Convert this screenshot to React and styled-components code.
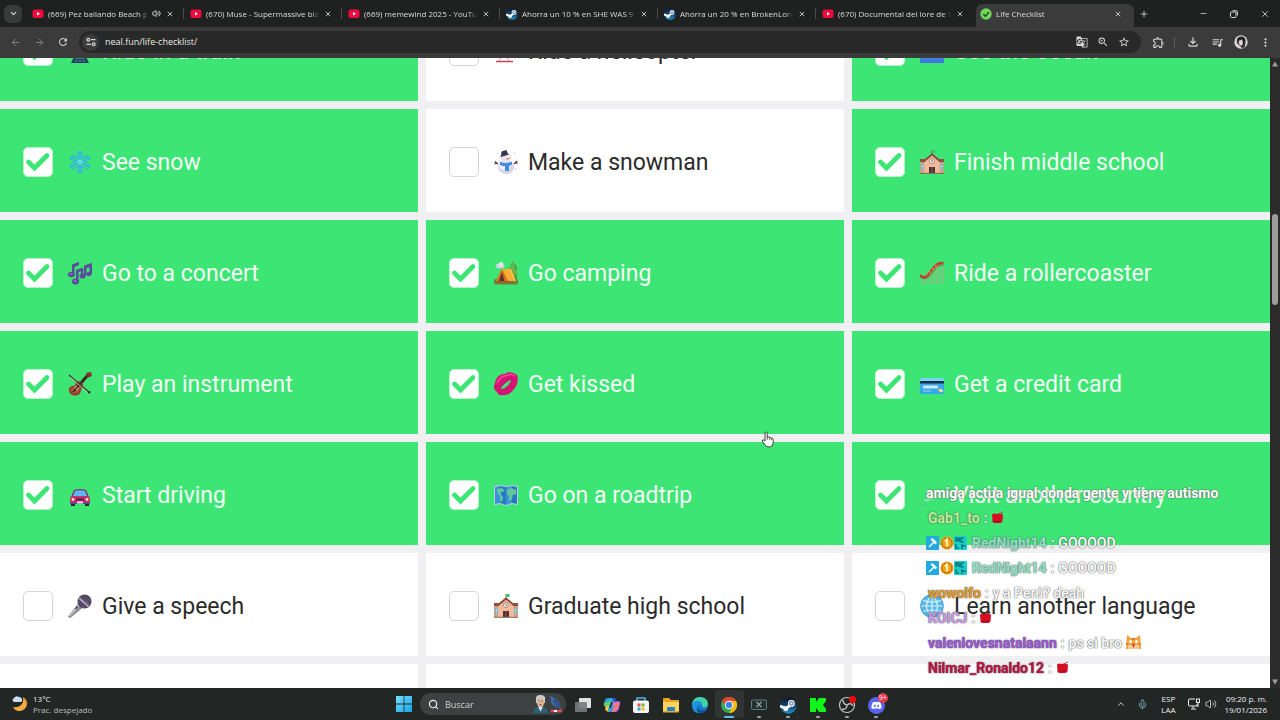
import React from "react";
import styled, { createGlobalStyle } from "styled-components";
import { Volume2, X, Plus, Minus, ChevronDown, ChevronUp, ArrowLeft, ArrowRight, Search, Mic } from "lucide-react";
import {
  MdGTranslate,
  MdZoomIn,
  MdStarBorder,
  MdOutlineExtension,
  MdOutlineFileDownload,
  MdQueueMusic,
  MdMoreVert,
  MdRefresh,
} from "react-icons/md";
import { FaDiscord } from "react-icons/fa";

const uiFont = `"Open Sans", "Noto Sans", sans-serif`;

const GlobalStyle = createGlobalStyle`
  *, *::before, *::after { box-sizing: border-box; }
  body { margin: 0; background: #202020; }
  button, input { font: inherit; color: inherit; margin: 0; padding: 0; border: 0; background: none; }
  button { cursor: pointer; }
  svg { display: block; flex: none; }
`;

const Screen = styled.div`
  display: flex;
  flex-direction: column;
  height: 100vh;
  overflow: hidden;
  font-family: ${uiFont};
`;

/* ---------- browser chrome ---------- */

const TabStrip = styled.header`
  display: flex;
  align-items: stretch;
  flex: none;
  height: 27px;
  background: #1f2020;
  color: #dcdcdc;
`;

const TabMenu = styled.button`
  display: grid;
  place-items: center;
  align-self: center;
  width: 18px;
  height: 18px;
  margin: 0 6px 0 4px;
  border-radius: 6px;
  background: #393a3a;
`;

const Tabs = styled.nav`
  display: flex;
  min-width: 0;
`;

const Tab = styled.div`
  display: flex;
  align-items: center;
  gap: 4px;
  flex: 0 1 158px;
  width: 158px;
  min-width: 0;
  margin-top: ${(p) => (p.$active ? "4px" : "0")};
  padding: 0 2px ${(p) => (p.$active ? "4px" : "0")} 4px;
  border-radius: 7px 7px 0 0;
  background: ${(p) => (p.$active ? "#3b3b3b" : "transparent")};
`;

const TabTitle = styled.a`
  flex: 1;
  min-width: 0;
  overflow: hidden;
  white-space: nowrap;
  font-size: 8px;
  line-height: 14px;
  color: inherit;
  text-decoration: none;
  mask-image: linear-gradient(to right, #000 calc(100% - 8px), transparent);
`;

const TabClose = styled.button`
  display: grid;
  place-items: center;
  width: 10px;
  height: 12px;
`;

const TabDivider = styled.span`
  width: 1px;
  height: 11px;
  margin-left: 4px;
  background: ${(p) => (p.$visible ? "#4a4a4a" : "transparent")};
`;

const IconButton = styled.button`
  display: grid;
  place-items: center;
  width: ${(p) => p.$w || 24}px;
  height: ${(p) => p.$h || 20}px;
  color: ${(p) => (p.$dim ? "#858585" : "#d6d6d6")};
`;

const WindowControls = styled.div`
  display: flex;
  align-items: center;
  margin-left: auto;
`;

const Toolbar = styled.div`
  display: flex;
  align-items: center;
  flex: none;
  height: 31px;
  padding: 0 3px 1px 3px;
  background: #3b3b3b;
  color: #d6d6d6;
`;

const AddressBar = styled.label`
  display: flex;
  align-items: center;
  flex: 1;
  height: 22px;
  margin: 0 6px 0 4px;
  padding: 0 6px 0 3px;
  border-radius: 11px;
  background: #282828;
`;

const SiteInfo = styled.span`
  display: grid;
  place-items: center;
  width: 17px;
  height: 17px;
  margin-right: 6px;
  border-radius: 50%;
  background: #3b3b3b;
`;

const AddressInput = styled.input`
  flex: 1;
  min-width: 0;
  font-size: 9px;
  line-height: 16px;
  color: #e8e8e8;
  outline: none;
`;

const ToolbarDivider = styled.span`
  width: 1px;
  height: 11px;
  margin: 0 6px 0 5px;
  background: #5a5a5a;
`;

/* ---------- checklist page ---------- */

const Viewport = styled.main`
  position: relative;
  display: flex;
  align-items: stretch;
  flex: 1;
  min-height: 0;
  overflow: hidden;
  background: #f0f0f3;
`;

const Grid = styled.div`
  display: grid;
  grid-template-columns: repeat(3, 1fr);
  grid-auto-rows: 103px;
  gap: 8px;
  flex: 1;
  align-self: flex-start;
  margin-top: -60px;
`;

const Card = styled.label`
  display: flex;
  align-items: center;
  padding: 3px 23px 0;
  font-family: Roboto, sans-serif;
  font-size: 23px;
  line-height: 30px;
  color: ${(p) => (p.$done ? "#f4fff7" : "#2b2b2b")};
  background: ${(p) => (p.$done ? "#3de575" : "#ffffff")};
  cursor: pointer;
`;

const BoxWrap = styled.span`
  display: grid;
  width: 30px;
  height: 30px;
  margin-right: 15px;

  & > * {
    grid-area: 1 / 1;
  }
`;

const Checkbox = styled.input`
  appearance: none;
  width: 30px;
  height: 30px;
  border: 1px solid #d5d5d8;
  border-radius: 5px;
  background: #ffffff;

  &:checked {
    border-color: #b9f3cb;
  }
`;

const CardText = styled.span`
  margin-left: 10px;
  padding-top: 2px;
  white-space: nowrap;
`;

const Scrollbar = styled.div`
  display: flex;
  flex-direction: column;
  align-items: center;
  width: 10px;
  padding: 2px 0;
  background: #2b2b2b;
`;

const ScrollTrack = styled.div`
  flex: 1;
  padding-top: 146px;
`;

const ScrollThumb = styled.div`
  width: 6px;
  height: 91px;
  border-radius: 3px;
  background: #9c9c9c;
`;

const Pointer = styled.svg`
  position: absolute;
  left: 761px;
  top: 373px;
`;

/* ---------- stream chat overlay ---------- */

const Chat = styled.ul`
  position: absolute;
  left: 926px;
  bottom: 8px;
  margin: 0;
  padding: 0;
  list-style: none;
  font-family: Roboto, sans-serif;
  font-size: 14px;
  font-weight: 500;
  color: #ffffff;
  pointer-events: none;
`;

const ChatLine = styled.li`
  display: flex;
  align-items: center;
  gap: 4px;
  height: 25px;
  padding-left: ${(p) => (p.$flush ? 0 : 2)}px;
  font-weight: ${(p) => (p.$heavy ? 700 : 500)};
  white-space: nowrap;
  text-shadow: 0 0 1px #666, 0 0 1px #777, 0 0 2px rgba(80, 80, 80, 0.5);
`;

const ChatName = styled.strong`
  font-weight: 700;
  color: ${(p) => p.$color};
`;

const Badges = styled.span`
  display: flex;
`;

/* ---------- taskbar ---------- */

const Taskbar = styled.footer`
  display: grid;
  grid-template-columns: 1fr auto 1fr;
  align-items: center;
  flex: none;
  height: 32px;
  background: #222625;
  color: #f0f0f0;
  font-size: 8px;
  line-height: 11px;
`;

const Weather = styled.button`
  display: flex;
  align-items: center;
  justify-self: start;
  gap: 5px;
  padding-left: 12px;
  text-align: left;
`;

const Stack = styled.span`
  display: flex;
  flex-direction: column;
  text-align: ${(p) => p.$align || "left"};
`;

const Muted = styled.span`
  color: #bdbfbe;
`;

const TaskCenter = styled.div`
  display: flex;
  align-items: center;
  gap: 2px;
`;

const SearchBox = styled.label`
  display: flex;
  align-items: center;
  gap: 6px;
  width: 146px;
  height: 22px;
  padding: 0 3px 0 8px;
  border-radius: 11px;
  background: #3d4141;
`;

const SearchInput = styled.input`
  flex: 1;
  min-width: 0;
  font-size: 9px;
  outline: none;

  &::placeholder {
    color: #d0d2d2;
    opacity: 1;
  }
`;

const Apps = styled.div`
  display: flex;
  width: 323px;
`;

const AppButton = styled.button`
  display: flex;
  flex-direction: column;
  align-items: center;
  justify-content: flex-end;
  flex: 1;
  height: 28px;
  gap: 2px;
  border-radius: 3px;
  background: ${(p) => (p.$active ? "#303433" : "transparent")};

  &::after {
    content: "";
    width: ${(p) => (p.$active ? 10 : 4)}px;
    height: 2px;
    border-radius: 1px;
    background: ${(p) => (p.$active ? "#5ebdec" : p.$open ? "#a2a5a4" : "transparent")};
  }
`;

const StartButton = styled.button`
  display: grid;
  place-items: center;
  width: 29px;
  height: 28px;
`;

const Tray = styled.div`
  display: flex;
  align-items: center;
  justify-self: end;
  padding-right: 13px;
`;

const TrayItem = styled.button`
  display: flex;
  align-items: center;
  gap: 5px;
  margin-left: ${(p) => p.$gap || 0}px;
`;

/* ---------- emoji drawings ---------- */

const emojis = {
  snowflake: (
    <g stroke="#35b5e4" strokeWidth="1.4" strokeLinecap="round" fill="none">
      {[0, 60, 120, 180, 240, 300].map((a) => (
        <g key={a} transform={`rotate(${a} 12 12)`}>
          <path d="M12 11V1M9.500 2l2.500 2.500L14.500 2M9 5.500l3 3 3-3" />
        </g>
      ))}
      <circle cx="12" cy="12" r="1.500" stroke="#7fd9f5" />
    </g>
  ),
  snowman: (
    <g>
      <ellipse cx="12" cy="17.500" rx="8" ry="6.500" fill="#d9d3ef" />
      <ellipse cx="11" cy="16" rx="6" ry="4.500" fill="#eeebfa" />
      <circle cx="12" cy="8" r="5.200" fill="#e7e2f6" />
      <path d="M7.500 1.500 12.500 0l1.500 4.500-7 2z" fill="#30384b" />
      <path d="M6.500 6.500 14.500 4" stroke="#30384b" strokeWidth="1.200" />
      <path d="m12 8.500 5-.5-4.500 2z" fill="#ed7c2d" />
      <path d="M6 11.500c4 2 8 2 12 0v3l-3 1.500v5h-4V16c-2 0-4-.5-5-1z" fill="#3f8ee0" />
      <path d="M4 14 .8 11.500M3 13l-2.500 1M20 14l3.200-3M21.500 12.500l2 1" stroke="#4b2f31" strokeWidth="1.200" />
      <path d="M3 3h1v1H3zM20 3h1v1h-1zM21 18h1v1h-1z" fill="#a9b8e5" />
    </g>
  ),
  school: (flag) => (
    <g>
      <path d="M0 11h24v12H0z" fill="#dca078" />
      <path d="m12 4 8 7v12H4V11z" fill="#f2b99a" />
      <path d="M3 12 12 4.500 21 12" stroke="#8c4637" strokeWidth="1.800" fill="none" />
      <path d="M0 9h5l-1 3H0zM19 9h5v3h-4z" fill="#94503e" />
      <path d="M1 13.500h3V20H1zM20 13.500h3V20h-3z" fill="#5db7da" />
      <path d="M2.500 13.500V20M21.500 13.500V20M1 16.500h3M20 16.500h3" stroke="#e8d3bf" strokeWidth=".6" />
      <path d="M9 17h6v6H9z" fill="#542f31" />
      <path d="M12 17v6M0 23.300h24" stroke="#7c655b" />
      <circle cx="12" cy="11" r="2.500" fill="#f9f0ea" stroke="#8a5c50" strokeWidth=".6" />
      <path d="M12 9.500V11l1 1" stroke="#333" strokeWidth=".7" fill="none" />
      <path d="M12 5V0" stroke="#6b4b3d" strokeWidth=".8" />
      <path d="M12 0h4l-1 1.500 1 1.500h-4z" fill={flag} />
    </g>
  ),
  notes: (
    <g fill="#5b4b9b">
      <path d="M4 3.500 11 1v3L6.500 6v8H4zM8 9l7-2.500v3L10.500 11v10H8zM16 4.500 24 2v3.500L18.500 7v8H16z" />
      <path d="M21.500 3.500H24V13h-2.500zM13 8h2.200v7H13z" />
      <ellipse cx="3.400" cy="13.500" rx="3.400" ry="2.800" />
      <ellipse cx="7.500" cy="20.500" rx="3.600" ry="3" />
      <ellipse cx="14.500" cy="15" rx="3" ry="2.600" />
      <ellipse cx="21" cy="13" rx="2.500" ry="2.300" />
      <ellipse cx="3" cy="13" rx="1.500" ry="1" fill="#8070cb" />
      <ellipse cx="7" cy="20" rx="1.600" ry="1" fill="#8070cb" />
    </g>
  ),
  camping: (
    <g>
      <path d="M16 19V6l2.500-6L23 6v13z" fill="#4c9d3e" />
      <path d="m18.500 0 5.500 13-5 2-5-6z" fill="#65b54c" />
      <ellipse cx="6" cy="5" rx="4.500" ry="2.500" fill="#cbd3de" />
      <circle cx="7" cy="3.500" r="2.500" fill="#dfe4ec" />
      <rect y="18" width="24" height="5.500" rx="1.500" fill="#718238" />
      <path d="M8 8h9l5 12H2z" fill="#f6ad32" />
      <path d="m8 8 6 12H2z" fill="#d86e24" />
      <path d="m8 11 2.500 9H5z" fill="#57362d" />
      <path d="m16 8 5 12" stroke="#ffd15c" />
      <path d="M3 21h14" stroke="#a3552c" strokeWidth="1.500" />
    </g>
  ),
  coaster: (
    <g>
      <path d="M2 17v6M5 17v6M8 15v8M11 12v11M14 8v15M17 4v19M20 2v21M23 3v20" stroke="#b7a786" strokeWidth=".9" />
      <path d="M0 14c5 5 8 0 11-4S17 1 23.500 2" stroke="#c93b2b" strokeWidth="2.200" fill="none" />
      <path d="M0 16c6 4 9 0 12-4s6-9 11.500-8" stroke="#8d5236" fill="none" />
      <path d="m9 10 2 2m1-5 2 2m1-5 2 2m-11 6 1 2" stroke="#ef8045" strokeWidth="1.400" />
    </g>
  ),
  violin: (
    <g>
      <path d="M12 12 20 3" stroke="#3a2725" strokeWidth="3" />
      <path d="m18 1 5-1 1 4-5 2z" fill="#7f3529" />
      <path d="M1 17c1-4 4-2 6-4 1-3 2-5 6-3 3 2 2 4 1 6-2 2 0 5-4 7-6 2-10-2-9-6z" fill="#94402e" />
      <path d="M3 18c1-3 4-1 6-4s4-2 3 1-1 5-4 6-5-1-5-3z" fill="#b55638" />
      <circle cx="8.500" cy="16" r="2" fill="#e7c3a6" />
      <path d="m5 20 8-9" stroke="#2a2020" strokeWidth="1.500" />
      <path d="M1 3 22 21" stroke="#50342f" strokeWidth="1.300" />
      <path d="M2 5 20 21" stroke="#e1d9d1" strokeWidth=".6" />
      <path d="m19.500 20 3-1-1 3z" fill="#33221f" />
    </g>
  ),
  kiss: (
    <g>
      <path d="M1 11C2 5 6 1.500 11 2c3-3 8-2 12 1 2 5 0 12-4 15-2 4-7 6-13 5-2 0-2-2-4-4-3-2-2-6-1-8z" fill="#d71375" />
      <path d="M3 11C6 6 9 3 12 4c3-2 6-2 9 0" stroke="#f14b9d" strokeWidth="1.500" fill="none" />
      <path d="M6 18c1-4 6-9 12-11-1 4-5 10-12 11z" fill="#4cde7a" stroke="#a90c59" strokeWidth=".8" />
    </g>
  ),
  card: (
    <g>
      <rect y="6" width="24" height="16" rx="1.500" fill="#38a7e7" />
      <path d="M0 7.500Q0 6 1.500 6h21Q24 6 24 7.500V9H0z" fill="#78d4f7" />
      <path d="M0 9h24v2.500H0z" fill="#1d3146" />
      <rect x="3" y="13.500" width="15" height="3" rx="1" fill="#cfe7f6" />
      <path d="M3 19h8" stroke="#90d3f5" />
      <circle cx="20" cy="18" r="1.600" fill="#f3d255" />
      <circle cx="21.500" cy="19" r="1.400" fill="#f7ebab" />
    </g>
  ),
  car: (
    <g>
      <path d="M3 18h4v5H3zM17 18h4v5h-4z" fill="#2f2833" />
      <path d="M6 7q6-2 12 0l3 7H3z" fill="#85317a" />
      <path d="M7 8q5-1.500 10 0l2 5H5z" fill="#5eb8ed" />
      <path d="M3 13h18l1 3v5H2v-5z" fill="#c92d71" />
      <path d="M2 19h20v2H2z" fill="#674683" />
      <circle cx="5" cy="16.500" r="1.400" fill="#ffeab7" />
      <circle cx="19" cy="16.500" r="1.400" fill="#ffeab7" />
      <path d="M8 15h8v3H8z" fill="#722353" />
      <path d="M9 18.500h6v2H9z" fill="#f3e6eb" />
    </g>
  ),
  map: (
    <g>
      <path d="m0 3 6-1 6 1 6-1 6 1v19l-6-1-6 2-6-2-6 1z" fill="#b9d0df" />
      <path d="m1 4 5-1v17l-5 1zM12 4l6-1v17l-6 2z" fill="#3a92dc" />
      <path d="m6 3 6 1v18l-6-2zM18 3l5 1v17l-5-1z" fill="#2779c4" />
      <path d="m3 6 5-1 3 3-4 1v3l2 2-1 5-2-1v-5l-3-4zM13 7l4-2 5 2v5l-3-1-1 5-3 2v-5l-2-2z" fill="#62c897" />
    </g>
  ),
  mic: (
    <g>
      <path d="M0 22.500 10.500 9l4.500 4.500L3 23.500q-2 1-3-1z" fill="#928d96" />
      <path d="M1.500 22 11 11" stroke="#c6c1c9" strokeWidth="1.500" />
      <circle cx="16.500" cy="7.500" r="7" fill="#4c435e" />
      <path d="m11 4 9.500 8.500" stroke="#aca3bd" strokeWidth="2.200" />
      <path d="m15 1 8 7M13 2l9 9M10 7l6 7M22 4l-7 9" stroke="#77698f" strokeWidth=".7" />
      <path d="m7.500 15 2-2.500" stroke="#51475e" strokeWidth="1.500" />
    </g>
  ),
  globe: (
    <g fill="none">
      <circle cx="12" cy="12" r="11.300" fill="#5bb9e8" stroke="#3494ce" />
      <path
        d="M1 12h22M3 6.500q9 3 18 0M3 17.500q9-3 18 0M12 1v22M12 1q-11 11 0 22M12 1q11 11 0 22"
        stroke="#d9f2fd"
        strokeWidth="1.200"
      />
    </g>
  ),
  train: (
    <g>
      <rect x="5" y="1" width="14" height="17" rx="4" fill="#3c6fa0" />
      <path d="m7 16-4 8h18l-4-8z" fill="#1f3d59" />
      <path d="M7 19.500h10M6 22h12" stroke="#4c78a0" />
    </g>
  ),
  helicopter: (
    <g>
      <ellipse cx="10" cy="12" rx="8" ry="6" fill="#d23c4d" />
      <path d="m7 18-2 4M13 18l2 4" stroke="#c4a6ab" />
      <path d="M2 22.500h17" stroke="#c83c4d" strokeWidth="1.400" />
    </g>
  ),
  wave: (
    <g>
      <rect y="2" width="24" height="22" rx="1" fill="#3f8ee0" />
      <path d="M0 20h24v4H0z" fill="#3f79e0" />
    </g>
  ),
  plane: (
    <g opacity=".8">
      <path d="m3 17 15-6q3-1 3 0t-3 3L7 19z" fill="#8fe3b0" />
      <path d="m10 13-5-6h2l8 4z" fill="#8fd9b8" />
      <path d="M1 22q3 1 5-1" stroke="#5bb088" fill="none" />
    </g>
  ),
};

function Emoji({ name, flag }) {
  const art = name === "school" ? emojis.school(flag) : emojis[name];
  return (
    <svg width="24" height="24" viewBox="0 0 24 24" aria-hidden="true">
      {art}
    </svg>
  );
}

const goals = [
  ["train", "Ride in a train", true],
  ["helicopter", "Ride a helicopter", false],
  ["wave", "See the ocean", true],
  ["snowflake", "See snow", true],
  ["snowman", "Make a snowman", false],
  ["school", "Finish middle school", true, "#3fc46f"],
  ["notes", "Go to a concert", true],
  ["camping", "Go camping", true],
  ["coaster", "Ride a rollercoaster", true],
  ["violin", "Play an instrument", true],
  ["kiss", "Get kissed", true],
  ["card", "Get a credit card", true],
  ["car", "Start driving", true],
  ["map", "Go on a roadtrip", true],
  ["plane", "Visit another country", true],
  ["mic", "Give a speech", false],
  ["school", "Graduate high school", false, "#3fc46f"],
  ["globe", "Learn another language", false],
];

function Goal({ icon, text, done, flag }) {
  return (
    <Card $done={done}>
      <BoxWrap>
        <Checkbox type="checkbox" defaultChecked={done} />
        {done && (
          <svg width="30" height="30" viewBox="0 0 30 30" aria-hidden="true">
            <path d="m5.500 15 6 6L24 8.500" fill="none" stroke="#3de575" strokeWidth="4.800" strokeLinecap="round" />
          </svg>
        )}
      </BoxWrap>
      <Emoji name={icon} flag={flag} />
      <CardText>{text}</CardText>
    </Card>
  );
}

/* ---------- favicons ---------- */

const YouTubeIcon = () => (
  <svg width="12" height="12" viewBox="0 0 12 12">
    <rect x=".5" y="1.500" width="11" height="8.500" rx="2.300" fill="#f0093c" />
    <path d="m5 4 3 1.800-3 1.800z" fill="#fff" />
  </svg>
);

const SteamIcon = ({ size = 12 }) => (
  <svg width={size} height={size} viewBox="0 0 16 16">
    <defs>
      <linearGradient id="steam" x1="0" y1="0" x2="0" y2="1">
        <stop offset="0" stopColor="#10182c" />
        <stop offset=".55" stopColor="#124a78" />
        <stop offset="1" stopColor="#2493cb" />
      </linearGradient>
    </defs>
    <circle cx="8" cy="8" r="7.800" fill="url(#steam)" />
    <path d="m0 8.500 5.500 2.300 4-2.800" stroke="#fff" strokeWidth="2.600" fill="none" />
    <circle cx="5.500" cy="11" r="2.300" fill="#fff" />
    <circle cx="10.700" cy="6" r="3.200" fill="#fff" />
    <circle cx="10.700" cy="6" r="1.800" fill="#cbdbea" stroke="#284e75" strokeWidth=".7" />
  </svg>
);

const CheckIcon = () => (
  <svg width="12" height="12" viewBox="0 0 12 12">
    <circle cx="6" cy="6" r="5.700" fill="#70d858" />
    <path d="m3.300 6.200 2 2 3.600-4" fill="none" stroke="#214321" strokeWidth="1.400" />
  </svg>
);

const tabs = [
  { icon: "yt", title: "(669) Pez bailando Beach party", sound: true },
  { icon: "yt", title: "(670) Muse - Supermassive black hole" },
  { icon: "yt", title: "(669) memewind 2025 - YouTube" },
  { icon: "steam", title: "Ahorra un 10 % en SHE WAS 98 en Steam" },
  { icon: "steam", title: "Ahorra un 20 % en BrokenLore en Steam" },
  { icon: "yt", title: "(670) Documental del lore de Terraria" },
  { icon: "check", title: "Life Checklist", active: true },
];

const tabIcons = { yt: <YouTubeIcon />, steam: <SteamIcon />, check: <CheckIcon /> };

function BrowserChrome() {
  return (
    <>
      <TabStrip>
        <TabMenu aria-label="Buscar pestañas">
          <ChevronDown size={9} strokeWidth={3} />
        </TabMenu>
        <Tabs>
          {tabs.map((t, i) => (
            <Tab key={i} $active={t.active}>
              {tabIcons[t.icon]}
              <TabTitle href="#">{t.title}</TabTitle>
              {t.sound && <Volume2 size={9} strokeWidth={2.5} />}
              <TabClose aria-label="Cerrar">
                <X size={8} strokeWidth={2.5} />
              </TabClose>
              <TabDivider $visible={i < tabs.length - 2} />
            </Tab>
          ))}
        </Tabs>
        <IconButton $w={20} $h={27} aria-label="Nueva pestaña">
          <Plus size={10} />
        </IconButton>
        <WindowControls>
          <IconButton $w={30} $h={27} aria-label="Minimizar">
            <Minus size={9} strokeWidth={2} />
          </IconButton>
          <IconButton $w={31} $h={27} aria-label="Restaurar">
            <svg width="8" height="8" viewBox="0 0 8 8" fill="none" stroke="currentColor">
              <rect x=".5" y="2" width="5.500" height="5.500" rx="1" />
              <path d="M2.500.7H6Q7.400.7 7.400 2v3.500" />
            </svg>
          </IconButton>
          <IconButton $w={31} $h={27} aria-label="Cerrar ventana">
            <X size={10} strokeWidth={2} />
          </IconButton>
        </WindowControls>
      </TabStrip>
      <Toolbar>
        <IconButton $dim aria-label="Atrás">
          <ArrowLeft size={11} />
        </IconButton>
        <IconButton $dim aria-label="Adelante">
          <ArrowRight size={11} />
        </IconButton>
        <IconButton aria-label="Recargar">
          <MdRefresh size={12} />
        </IconButton>
        <AddressBar>
          <SiteInfo>
            <svg width="10" height="10" viewBox="0 0 10 10" fill="none" stroke="currentColor" strokeWidth="1.200">
              <circle cx="2.300" cy="2.700" r="1.400" />
              <path d="M5 2.700h4.500M.5 7.300H5" />
              <circle cx="7.700" cy="7.300" r="1.400" />
            </svg>
          </SiteInfo>
          <AddressInput aria-label="Dirección" defaultValue="neal.fun/life-checklist/" />
          <IconButton $w={21} aria-label="Traducir">
            <MdGTranslate size={12} />
          </IconButton>
          <IconButton $w={21} aria-label="Zoom">
            <MdZoomIn size={12} />
          </IconButton>
          <IconButton $w={22} aria-label="Favorito">
            <MdStarBorder size={12} />
          </IconButton>
        </AddressBar>
        <IconButton $w={22} aria-label="Extensiones">
          <MdOutlineExtension size={13} />
        </IconButton>
        <ToolbarDivider />
        <IconButton aria-label="Descargas">
          <MdOutlineFileDownload size={14} />
        </IconButton>
        <IconButton aria-label="Multimedia">
          <MdQueueMusic size={13} />
        </IconButton>
        <IconButton aria-label="Perfil">
          <svg width="14" height="14" viewBox="0 0 14 14">
            <circle cx="7" cy="7" r="6.700" fill="#d6d6d6" />
            <path d="M3 8Q2 1.500 7 1.500T11.500 7L11 11l-3 2-3-3z" fill="#262424" />
            <path d="M4.500 6 8 4.500 9 8l-1.500 3-2-1z" fill="#e2d7d2" />
            <path d="m8 11 3-3v4l-3 1.500z" fill="#3a3636" />
          </svg>
        </IconButton>
        <IconButton aria-label="Menú">
          <MdMoreVert size={13} />
        </IconButton>
      </Toolbar>
    </>
  );
}

/* ---------- chat ---------- */

const Rose = () => (
  <svg width="13" height="13" viewBox="0 0 13 13">
    <path d="M1 3.500 3 2.500l3 .5 3-1 1 1 2 .5-.5 7q-1 1.500-3 1.500H3L1.500 11z" fill="#d40f24" />
    <path d="m10 2 1.500-1M2 10q3 2 8 0" stroke="#a50d1e" fill="none" />
  </svg>
);

const Cat = () => (
  <svg width="15" height="15" viewBox="0 0 15 15">
    <path d="m1 0 4 3h5l4-3 1 14H0z" fill="#f4a13c" />
    <path d="M2 10h11v4H2z" fill="#f8c98e" />
    <circle cx="4.500" cy="6.500" r="1.500" fill="#fff" />
    <circle cx="10.500" cy="6.500" r="1.500" fill="#fff" />
    <path d="M6 9h3l-1.500 4z" fill="#c4343d" />
    <path d="M6 4h3M0 9h2M13 9h2" stroke="#a95822" />
  </svg>
);

const UserBadges = () => (
  <Badges>
    <svg width="42" height="14" viewBox="0 0 42 14">
      <rect width="13" height="14" rx="1" fill="#22a9e1" />
      <path d="m3 11 5-5M5 3l5 5M6 2.500l4.500 4.500" stroke="#f1fbff" strokeWidth="1.600" />
      <circle cx="21" cy="7" r="6.600" fill="#f4a51c" />
      <circle cx="21" cy="7" r="5" fill="none" stroke="#a96809" />
      <path d="m19 5.500 2-2v7" stroke="#fff4c2" strokeWidth="1.800" fill="none" />
      <rect x="28" width="13" height="14" rx="1" fill="#17d0c6" />
      <path d="M30 6V2h3v4M30 4h3M38 2h-3v4h3M30 8v4h3M36 8v5M36 10h4" stroke="#075b6d" strokeWidth="1.200" fill="none" />
    </svg>
  </Badges>
);

function ChatOverlay() {
  return (
    <Chat>
      <ChatLine $flush $heavy>
        amiga actua igual conda gente y tiene autismo
      </ChatLine>
      <ChatLine>
        <ChatName $color="#b4f28e">Gab1_to</ChatName>: <Rose />
      </ChatLine>
      {[0, 1].map((i) => (
        <ChatLine key={i} $flush>
          <UserBadges />
          <ChatName $color="#8be0c5">RedNight14</ChatName>: <span>GOOOOD</span>
        </ChatLine>
      ))}
      <ChatLine>
        <ChatName $color="#e19a2b">wowolfo</ChatName>: <span>y a Perú? deah</span>
      </ChatLine>
      <ChatLine>
        <ChatName $color="#c99be8">KOICJ</ChatName>: <Rose />
      </ChatLine>
      <ChatLine>
        <ChatName $color="#9b56d8">valenlovesnatalaann</ChatName>: <span>ps si bro</span>
        <Cat />
      </ChatLine>
      <ChatLine>
        <ChatName $color="#bd1244">Nilmar_Ronaldo12</ChatName>: <Rose />
      </ChatLine>
    </Chat>
  );
}

/* ---------- taskbar icons ---------- */

const appIcons = {
  taskview: (
    <>
      <rect x="5" y="2" width="12" height="10" rx="1" fill="#e2e4e4" />
      <rect x="1" y="6" width="12" height="10" rx="1" fill="#777c7d" opacity=".9" />
    </>
  ),
  copilot: (
    <>
      <path d="M5 2h6q2 0 1 3L10 13q-1 3-4 3-2 0-1-3l1-3H3q-3 0-2-3l1-3q1-2 3-2z" fill="#26a7ea" />
      <path d="M4 6 1 7q-1 3 2 4l3 1 2-8z" fill="#65cc67" />
      <path d="M3 10h3l-1 4q0 2 2 2-4 0-5-3z" fill="#f5c84c" />
      <path d="M10 5h4q4 0 3 3l-1 4q-1 4-4 4H7q2 0 3-3z" fill="#d767dc" />
      <path d="m12 6 4 2-2 5q-2 3-5 3l2-5z" fill="#f07e68" />
      <path d="M9 2h2q2 0 3 4h-3q-1-2-2-4z" fill="#304fc9" />
      <path d="m9 6-2 6" stroke="#222625" strokeWidth="1.500" />
    </>
  ),
  store: (
    <>
      <path d="M5 5V2h8v3" stroke="#4cb5e8" strokeWidth="1.600" fill="none" />
      <rect x="1" y="4.500" width="16" height="12.500" rx="2" fill="#f4f4f4" />
      <path d="M5.500 7.500h3v3h-3z" fill="#ee5438" />
      <path d="M9.500 7.500h3v3h-3z" fill="#72b62d" />
      <path d="M5.500 11.500h3v3h-3z" fill="#2ca5e5" />
      <path d="M9.500 11.500h3v3h-3z" fill="#f9b91a" />
    </>
  ),
  folder: (
    <>
      <path d="M1 3q0-1 1-1h5l2 2h7q1 0 1 1v11H1z" fill="#e9a322" />
      <path d="M1 6h16v10H1z" fill="#fcd35b" />
      <path d="M5 16v-4q0-1 1-1h6q1 0 1 1v4z" fill="#2182cd" />
      <path d="M1 15h16v1.500H1z" fill="#e8ae31" />
    </>
  ),
  edge: (
    <>
      <circle cx="9" cy="9" r="8" fill="#1679cd" />
      <path d="M1 9Q2 1 9 1c6 0 8 4 8 7 0 4-5 4-6 2 1-4-3-5-6-4-2 .5-3 2-4 3z" fill="#42d1a5" />
      <path d="M1 9Q3 4 8 5q4 1 3 5-2-3-4 0-1 5 7 4-3 4-7 3-6-1-6-8z" fill="#1c91dd" />
      <path d="M7 10q-1 5 7 4 1 0 2-1-3 5-8 4-4-3-1-7z" fill="#115396" />
    </>
  ),
  chrome: (
    <>
      <circle cx="9" cy="9" r="8" fill="#35a853" />
      <path d="M2.100 5A8 8 0 0 1 16 5H9L6 10z" fill="#e94335" />
      <path d="M16 5a8 8 0 0 1-7 12l3.500-6L9 5z" fill="#fbbc08" />
      <circle cx="9" cy="9" r="4.200" fill="#fff" />
      <circle cx="9" cy="9" r="3.200" fill="#3f7fed" />
    </>
  ),
  xbox: (
    <>
      <rect x="1.500" y="4" width="15" height="9.500" rx="1" fill="#26302f" stroke="#588079" />
      <path d="m6.500 6 5 5M11.500 6l-5 5" stroke="#91aaa5" strokeWidth="1.200" />
    </>
  ),
  kick: <path d="M1 2h6v4l3-4h7v3l-3 4 3 4v3h-7l-3-4v4H1z" fill="#12f51a" />,
  obs: (
    <>
      <circle cx="9" cy="9" r="7.500" fill="#202423" stroke="#c5c7c7" strokeWidth="1.200" />
      <path d="M9 9q-4-1-4-5M9 9q4-3 6 1M9 9q0 5-5 4" stroke="#b9bcbc" strokeWidth="1.500" fill="none" />
      <circle cx="14.500" cy="3.500" r="3.500" fill="#f00b0b" />
    </>
  ),
};

const apps = [
  ["taskview", "Vista de tareas"],
  ["copilot", "Copilot"],
  ["store", "Microsoft Store"],
  ["folder", "Explorador"],
  ["edge", "Edge"],
  ["chrome", "Chrome"],
  ["xbox", "Captura"],
  ["steam", "Steam"],
  ["kick", "Kick"],
  ["obs", "OBS"],
  ["discord", "Discord"],
];

const DiscordWrap = styled.span`
  position: relative;
  display: grid;
  place-items: center;
  width: 17px;
  height: 17px;
  border-radius: 50%;
  background: #5865f2;
  color: #ffffff;
`;

const DiscordCount = styled.span`
  position: absolute;
  top: -4px;
  right: -3px;
  width: 10px;
  height: 10px;
  border-radius: 5px;
  background: #e5394b;
  font-size: 7px;
  line-height: 10px;
  text-align: center;
`;

function AppIcon({ name }) {
  if (name === "steam") return <SteamIcon size={17} />;
  if (name === "discord")
    return (
      <DiscordWrap>
        <FaDiscord size={11} />
        <DiscordCount>9+</DiscordCount>
      </DiscordWrap>
    );
  return (
    <svg width="18" height="18" viewBox="0 0 18 18" aria-hidden="true">
      {appIcons[name]}
    </svg>
  );
}

function WindowsTaskbar() {
  return (
    <Taskbar>
      <Weather>
        <svg width="16" height="16" viewBox="0 0 16 16">
          <path d="M11 1q5 3 4 8-2 6-8 6-4 0-6-4 5 1 8-2 3-3 2-8z" fill="#f4ae3d" />
          <path d="M12 2q4 4 2 8-3 5-9 4 8 1 9-5z" fill="#dc8529" />
          <path d="M2 6Q-1 4 2 2q2-3 5-1 3 0 3 3 1 2-2 2z" fill="#c8dcf3" />
        </svg>
        <Stack>
          <span>13°C</span>
          <Muted>Prac. despejado</Muted>
        </Stack>
      </Weather>
      <TaskCenter>
        <StartButton aria-label="Inicio">
          <svg width="16" height="16" viewBox="0 0 16 16">
            <defs>
              <linearGradient id="win" x1="0" y1="0" x2="1" y2="1">
                <stop offset="0" stopColor="#75e1fa" />
                <stop offset="1" stopColor="#17a3eb" />
              </linearGradient>
            </defs>
            <path d="M0 0h7.600v7.600H0zM8.400 0H16v7.600H8.400zM0 8.400h7.600V16H0zM8.400 8.400H16V16H8.400z" fill="url(#win)" />
          </svg>
        </StartButton>
        <SearchBox>
          <Search size={11} strokeWidth={2.5} />
          <SearchInput aria-label="Buscar" placeholder="Buscar" />
          <svg width="30" height="18" viewBox="0 0 30 18" aria-hidden="true">
            <path d="M0 18q1-5 5-6h5q4 1 5 6z" fill="#28647c" />
            <path d="m5 11.500 2.500 5 2.500-5z" fill="#efe6df" />
            <path d="M3 5q-1-5 4.500-5T12 5v3H3z" fill="#c9cccd" />
            <path d="M4 4q3-2 7 0v5q-1 3-3.500 3T4 9z" fill="#dcb79a" />
            <path d="M5.500 6h1M8.500 6h1M6.500 9.500h2" stroke="#6b4a3b" />
            <path d="M16 2q3-2 5 1l5 4 2 7-7-3q-4-3-3-7z" fill="#3f66a5" />
            <path d="m20 5 6 8M22 5l5 6" stroke="#253c71" />
            <path d="M18 16h11" stroke="#e14c50" strokeWidth="2.500" />
            <path d="M21 16h3" stroke="#fff" strokeWidth="2" />
          </svg>
        </SearchBox>
        <Apps>
          {apps.map(([name, label], i) => (
            <AppButton key={name} aria-label={label} $active={name === "chrome"} $open={i > 5}>
              <AppIcon name={name} />
            </AppButton>
          ))}
        </Apps>
      </TaskCenter>
      <Tray>
        <TrayItem aria-label="Mostrar iconos ocultos">
          <ChevronUp size={10} />
        </TrayItem>
        <TrayItem $gap={11} aria-label="Micrófono">
          <Mic size={11} color="#78b1b8" />
        </TrayItem>
        <TrayItem $gap={13}>
          <Stack $align="center">
            <span>ESP</span>
            <span>LAA</span>
          </Stack>
        </TrayItem>
        <TrayItem $gap={12} aria-label="Red y volumen">
          <svg width="12" height="12" viewBox="0 0 12 12" fill="none" stroke="currentColor">
            <path d="M7 1H1.500q-1 0-1 1v5q0 1 1 1H9V6M5 8v2.500M3 11h5" />
            <rect x="8.500" y="1" width="3" height="3.500" />
            <path d="M10 5v4" />
          </svg>
          <Volume2 size={12} strokeWidth={1.5} />
        </TrayItem>
        <TrayItem $gap={8}>
          <Stack $align="right">
            <span>09:20 p. m.</span>
            <span>19/01/2026</span>
          </Stack>
        </TrayItem>
      </Tray>
    </Taskbar>
  );
}

export default function App() {
  return (
    <Screen>
      <GlobalStyle />
      <BrowserChrome />
      <Viewport>
        <Grid>
          {goals.map(([icon, text, done, flag]) => (
            <Goal key={text} icon={icon} text={text} done={done} flag={flag} />
          ))}
          <Card />
          <Card />
          <Card />
        </Grid>
        <Scrollbar>
          <svg width="6" height="8" viewBox="0 0 6 8">
            <path d="m3 1.500 3 5H0z" fill="#9c9c9c" />
          </svg>
          <ScrollTrack>
            <ScrollThumb />
          </ScrollTrack>
          <svg width="6" height="8" viewBox="0 0 6 8">
            <path d="m3 6.500 3-5H0z" fill="#9c9c9c" />
          </svg>
        </Scrollbar>
        <Pointer width="13" height="17" viewBox="0 0 13 17" aria-hidden="true">
          <path
            d="M4 10V2.200q0-1.200 1.100-1.200t1.100 1.200V6q2-.5 2.500.5 1.500-.3 1.800.7 1.700-.2 1.700 1.300V12q0 4-4 4-3 0-4-2l-3-4q0-1.500 1.500-1z"
            fill="#fff"
            stroke="#2c2c2c"
            strokeWidth=".9"
          />
          <path d="M6.200 6v3M8.700 6.700V9M10.500 7.500V9" stroke="#2c2c2c" strokeWidth=".7" />
        </Pointer>
        <ChatOverlay />
      </Viewport>
      <WindowsTaskbar />
    </Screen>
  );
}
